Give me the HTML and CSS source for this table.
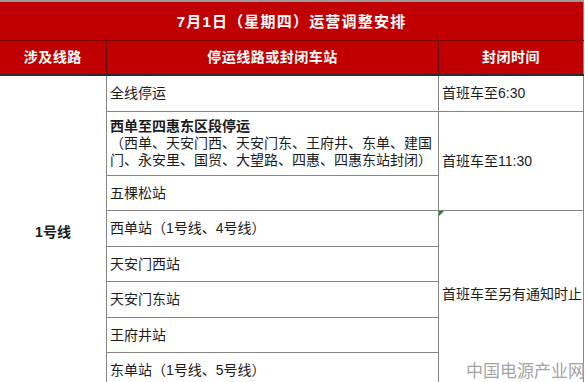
FILE: index.html
```html
<!DOCTYPE html>
<html lang="zh-CN">
<head>
<meta charset="utf-8">
<title>7月1日（星期四）运营调整安排</title>
<link rel="stylesheet" href="styles.css">
</head>
<body>
<div class="page">
  <table class="schedule">
    <colgroup><col class="c1"><col class="c2"><col class="c3"></colgroup>
    <thead>
      <tr class="title"><th colspan="3">7月1日（星期四）运营调整安排</th></tr>
      <tr class="head"><th>涉及线路</th><th>停运线路或封闭车站</th><th>封闭时间</th></tr>
    </thead>
    <tbody>
      <tr class="r1"><td rowspan="8" class="line">1号线</td><td>全线停运</td><td>首班车至6:30</td></tr>
      <tr class="r2"><td><strong>西单至四惠东区段停运</strong><br>（西单、天安门西、天安门东、王府井、东单、建国门、永安里、国贸、大望路、四惠、四惠东站封闭）</td><td rowspan="2">首班车至11:30</td></tr>
      <tr class="r3"><td>五棵松站</td></tr>
      <tr class="r4"><td>西单站（1号线、4号线）</td><td rowspan="5" class="noted"><span class="flag"></span>首班车至另有通知时止</td></tr>
      <tr class="r5"><td>天安门西站</td></tr>
      <tr class="r6"><td>天安门东站</td></tr>
      <tr class="r7"><td>王府井站</td></tr>
      <tr class="r8"><td>东单站（1号线、5号线）</td></tr>
    </tbody>
  </table>
  <div class="watermark">中国电源产业网</div>
</div>
</body>
</html>
```

FILE: styles.css
```css
html, body {
  margin: 0;
  padding: 0;
  background: #ffffff;
}
.page {
  position: relative;
  width: 585px;
  height: 382px;
  overflow: hidden;
  font-family: "Liberation Sans", "Noto Sans CJK SC", sans-serif;
}
.schedule {
  border-collapse: collapse;
  table-layout: fixed;
  width: 584px;
  margin-left: -1px;
  color: #1c1c1c;
  font-size: 14px;
  line-height: 17px;
}
.c1 { width: 107px; }
.c2 { width: 332px; }
.c3 { width: 145px; }

.schedule th,
.schedule td {
  padding: 0 3px;
  vertical-align: middle;
  text-align: left;
}
.schedule thead th {
  background: #c00000;
  color: #ffffff;
  font-weight: bold;
  text-align: center;
}
.title th {
  height: 38px;
  border-top: 2px solid #9b9b9b;
  border-left: 1px solid #9b9b9b;
  border-right: 1px solid #8a8a8a;
  border-bottom: 1px solid #7c0000;
  font-size: 15px;
  letter-spacing: 1.2px;
}
.head th {
  height: 33px;
  border-right: 1px solid #5a0000;
  border-bottom: 2px solid #2a2a2a;
  letter-spacing: 0.5px;
}
.head th:last-child { border-right: 1px solid #8a8a8a; }

.schedule td {
  border: 1px solid #868686;
}
.schedule td:first-child.line { border-left-color: transparent; }
.line {
  text-align: center !important;
  font-weight: bold;
}
.r1 td { height: 35px; }
.r2 td { height: 63px; }
.r3 td { height: 34px; }
.r4 td { height: 35px; }
.r5 td { height: 34px; }
.r6 td { height: 35px; }
.r7 td { height: 34px; }
.r8 td { height: 35px; }

.noted {
  position: relative;
  white-space: nowrap;
  padding-bottom: 10px !important;
}
.flag {
  position: absolute;
  left: 0;
  top: 0;
  width: 0;
  height: 0;
  border-top: 5px solid #1e8a1e;
  border-right: 5px solid transparent;
}
.watermark {
  position: absolute;
  right: 0;
  bottom: 2px;
  font-family: "Noto Sans CJK SC", sans-serif;
  font-size: 17px;
  line-height: 20px;
  color: #a4a4a4;
  letter-spacing: 0;
}
```
